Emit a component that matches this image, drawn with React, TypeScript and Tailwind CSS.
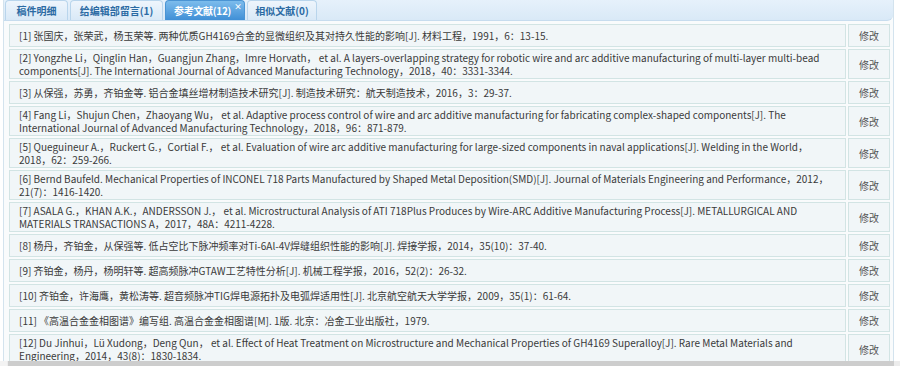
import React from "react";

const rows: string[][] = [
  ["[1] 张国庆，张荣武，杨玉荣等. 两种优质GH4169合金的显微组织及其对持久性能的影响[J]. 材料工程，1991，6：13-15."],
  [
    "[2] Yongzhe Li，Qinglin Han，Guangjun Zhang，Imre Horvath， et al. A layers-overlapping strategy for robotic wire and arc additive manufacturing of multi-layer multi-bead",
    "components[J]. The International Journal of Advanced Manufacturing Technology，2018，40：3331-3344.",
  ],
  ["[3] 从保强，苏勇，齐铂金等. 铝合金填丝增材制造技术研究[J]. 制造技术研究：航天制造技术，2016，3：29-37."],
  [
    "[4] Fang Li，Shujun Chen，Zhaoyang Wu， et al. Adaptive process control of wire and arc additive manufacturing for fabricating complex-shaped components[J]. The",
    "International Journal of Advanced Manufacturing Technology，2018，96：871-879.",
  ],
  [
    "[5] Queguineur A.，Ruckert G.，Cortial F.， et al. Evaluation of wire arc additive manufacturing for large-sized components in naval applications[J]. Welding in the World，",
    "2018，62：259-266.",
  ],
  [
    "[6] Bernd Baufeld. Mechanical Properties of INCONEL 718 Parts Manufactured by Shaped Metal Deposition(SMD)[J]. Journal of Materials Engineering and Performance，2012，",
    "21(7)：1416-1420.",
  ],
  [
    "[7] ASALA G.，KHAN A.K.，ANDERSSON J.， et al. Microstructural Analysis of ATI 718Plus Produces by Wire-ARC Additive Manufacturing Process[J]. METALLURGICAL AND",
    "MATERIALS TRANSACTIONS A，2017，48A：4211-4228.",
  ],
  ["[8] 杨丹，齐铂金，从保强等. 低占空比下脉冲频率对Ti-6Al-4V焊缝组织性能的影响[J]. 焊接学报，2014，35(10)：37-40."],
  ["[9] 齐铂金，杨丹，杨明轩等. 超高频脉冲GTAW工艺特性分析[J]. 机械工程学报，2016，52(2)：26-32."],
  ["[10] 齐铂金，许海鹰，黄松涛等. 超音频脉冲TIG焊电源拓扑及电弧焊适用性[J]. 北京航空航天大学学报，2009，35(1)：61-64."],
  ["[11] 《高温合金金相图谱》编写组. 高温合金金相图谱[M]. 1版. 北京：冶金工业出版社，1979."],
  [
    "[12] Du Jinhui，Lü Xudong，Deng Qun， et al. Effect of Heat Treatment on Microstructure and Mechanical Properties of GH4169 Superalloy[J]. Rare Metal Materials and",
    "Engineering，2014，43(8)：1830-1834.",
  ],
];

function Tab({ label, width, active }: { label: string; width: string; active?: boolean }) {
  if (active) {
    return (
      <div className={`h-[20px] ${width} flex items-start pl-[8px] pr-[2px] rounded-t-[4px] border border-b-0 border-[#4a94d4] bg-gradient-to-b from-[#7cbcec] to-[#3f8fd6] text-white font-bold text-[10px]`}>
        <span className="self-center tracking-[-0.3px]">{label}</span>
        <span className="ml-auto mt-[2px] text-[8px] leading-[8px] font-bold">×</span>
      </div>
    );
  }
  return (
    <div className={`h-[20px] ${width} flex items-center justify-center rounded-t-[4px] border border-b-0 border-[#b9d5ec] bg-gradient-to-b from-[#eef5fc] to-[#d9e9f7] text-[#2b6aa3] font-bold text-[10px]`}>
      {label}
    </div>
  );
}

export default function App() {
  return (
    <div className="w-[900px] h-[366px] overflow-hidden bg-white relative font-['Noto_Sans_CJK_SC','Noto_Sans',sans-serif]">
      <div className="ml-[3px] w-[891px] h-full border-l border-r border-[#d3e3ee] bg-[#f9fbfc]">
        <div className="h-[21px] bg-gradient-to-b from-[#e6f1fb] to-[#d9e9f7] rounded-br-[6px] border-b border-[#c7dcee] flex items-end pl-[1px] gap-[2px]">
          <Tab label="稿件明细" width="w-[63px]" />
          <Tab label="给编辑部留言(1)" width="w-[93px]" />
          <Tab label="参考文献(12)" width="w-[80px]" active />
          <Tab label="相似文献(0)" width="w-[70px]" />
        </div>
        <table className="ml-[3px] mt-[1px] w-[885px] border-separate border-spacing-[2px] text-[10px] leading-[13px] text-[#3a3a3a]">
          <tbody>
            {rows.map((lines, i) => (
              <tr key={i}>
                <td className="h-[23px] pl-[9px] pr-[4px] py-[1px] bg-[#f1f6f8] border border-[#d2e4e4] align-middle">
                  {lines.map((l, j) => (
                    <div key={j} className="whitespace-nowrap">
                      {l}
                    </div>
                  ))}
                </td>
                <td className="w-[42px] h-[23px] bg-[#f1f6f8] border border-[#d2e4e4] text-center align-middle text-[#555]">
                  修改
                </td>
              </tr>
            ))}
          </tbody>
        </table>
      </div>
      <div className="absolute left-0 bottom-0 w-[900px] h-[5px] bg-[#ececec] flex">
        <div className="w-[7px] h-full bg-[#f3f3f3]" />
        <div className="ml-[1px] w-[886px] h-full bg-[#cdcdcd]" />
      </div>
    </div>
  );
}
